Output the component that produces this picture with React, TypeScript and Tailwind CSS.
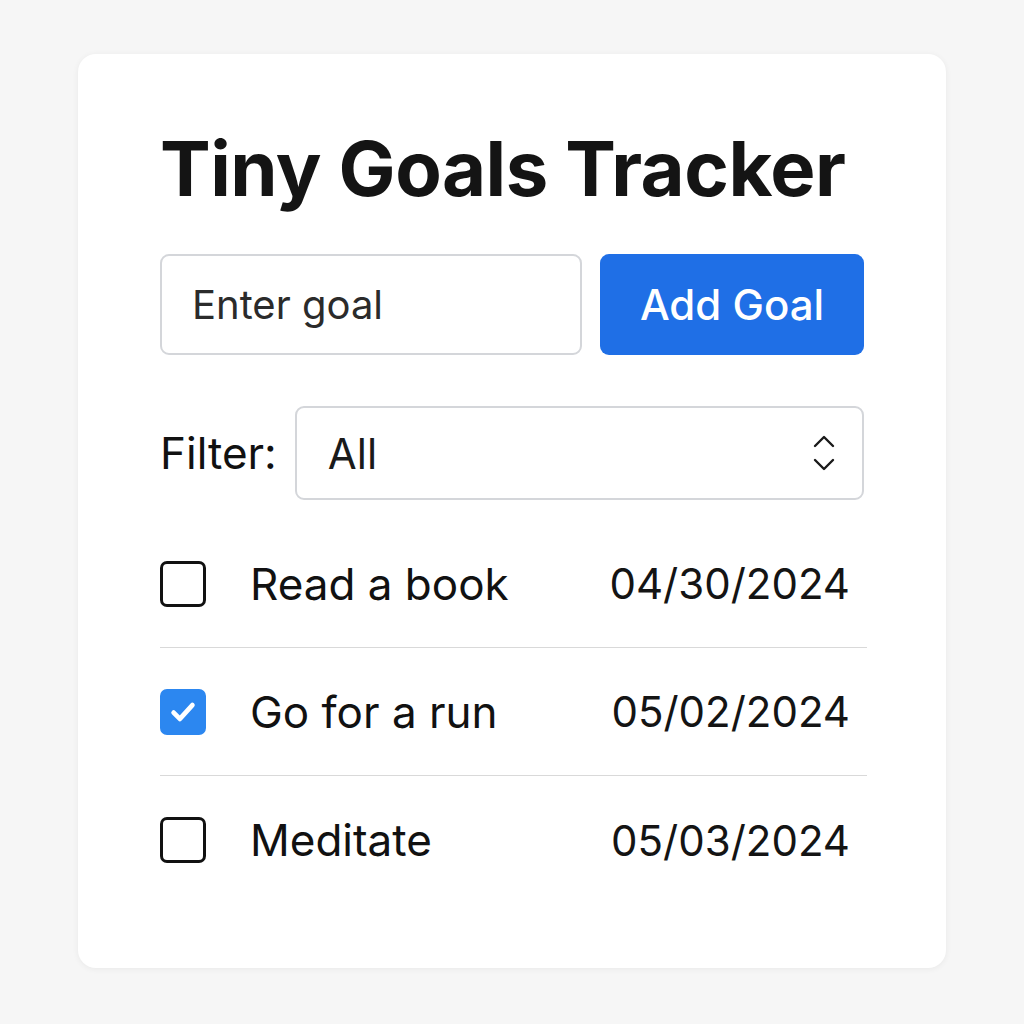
import { useState } from 'react';

type Goal = { id: number; text: string; date: string; done: boolean };

const initialGoals: Goal[] = [
  { id: 1, text: 'Read a book', date: '04/30/2024', done: false },
  { id: 2, text: 'Go for a run', date: '05/02/2024', done: true },
  { id: 3, text: 'Meditate', date: '05/03/2024', done: false },
];

const App = () => {
  const [goals, setGoals] = useState<Goal[]>(initialGoals);

  const toggle = (id: number) =>
    setGoals((g) => g.map((x) => (x.id === id ? { ...x, done: !x.done } : x)));

  return (
    <div className="min-h-screen bg-[#f6f6f6] pt-[54px] flex justify-center font-['Inter',sans-serif] text-[#111]">
      <div className="w-[868px] h-[914px] bg-white rounded-[18px] shadow-[0_1px_6px_rgba(0,0,0,0.06)] pt-[76px] px-[82px] pb-[63px]">
        {/* Title */}
        <h1 className="text-[76px] leading-none font-bold tracking-[-0.5px] text-[#141414]">Tiny Goals Tracker</h1>

        {/* Add goal */}
        <div className="mt-[48px] flex gap-[18px]">
          <input
            type="text"
            placeholder="Enter goal"
            className="w-[422px] h-[101px] px-[30px] border-2 border-[#d4d6da] rounded-[9px] text-[40px] text-[#222] placeholder:text-[#2b2b2b] outline-none"
          />
          <button className="w-[265px] h-[101px] bg-[#1f6fe6] rounded-[9px] text-white text-[42px] font-medium">
            Add Goal
          </button>
        </div>

        {/* Filter */}
        <div className="mt-[51px] flex items-center gap-[18px]">
          <span className="text-[44px]">Filter:</span>
          <div className="flex-1 h-[94px] border-2 border-[#d4d6da] rounded-[9px] flex items-center justify-between pl-[31px] pr-[26px]">
            <span className="text-[42px] text-[#1a1a1a]">All</span>
            <svg width="24" height="38" viewBox="0 0 24 38" fill="none" stroke="#1a1a1a" strokeWidth="2.4" strokeLinecap="round" strokeLinejoin="round">
              <path d="M3 12 L12 3 L21 12" />
              <path d="M3 26 L12 35 L21 26" />
            </svg>
          </div>
        </div>

        {/* Goals list */}
        <div className="mt-[20px] w-[707px]">
          {goals.map((g, i) => (
            <div
              key={g.id}
              className={`h-[128px] flex items-center ${i < goals.length - 1 ? 'border-b border-[#d9d9d9]' : ''}`}
            >
              <button
                onClick={() => toggle(g.id)}
                className={`w-[46px] h-[46px] rounded-[7px] flex items-center justify-center ${
                  g.done ? 'bg-[#2c87f0] border-2 border-[#2c87f0]' : 'border-[3px] border-[#111]'
                }`}
              >
                {g.done && (
                  <svg width="30" height="30" viewBox="0 0 24 24" fill="none" stroke="white" strokeWidth="3.8" strokeLinecap="round" strokeLinejoin="round">
                    <path d="M4.5 12.5 L9.5 17.5 L19.5 6.5" />
                  </svg>
                )}
              </button>
              <span className="ml-[44px] text-[44px] flex-1">{g.text}</span>
              <span className="mr-[17px] text-[42px] text-[#141414]">{g.date}</span>
            </div>
          ))}
        </div>
      </div>
    </div>
  );
};

export default App;
